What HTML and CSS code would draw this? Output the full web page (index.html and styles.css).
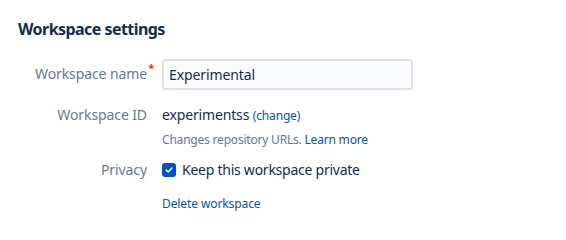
FILE: index.html
```html
<!DOCTYPE html>
<html>
<head>
<meta charset="utf-8">
<link rel="stylesheet" href="styles.css">
</head>
<body>
<div class="page">
  <h1 class="title">Workspace settings</h1>
  <div class="form">
    <div class="row row-name">
      <div class="label"><span class="label-text">Workspace name<span class="req">*</span></span></div>
      <div class="field"><input class="input" type="text" value="Experimental"></div>
    </div>
    <div class="row row-id">
      <div class="label">Workspace ID</div>
      <div class="field">
        <div class="value">experimentss <a class="link small" href="#">(change)</a></div>
        <div class="help">Changes repository URLs. <a class="link" href="#">Learn more</a></div>
      </div>
    </div>
    <div class="row row-privacy">
      <div class="label">Privacy</div>
      <div class="field">
        <label class="check">
          <span class="box"><svg width="10" height="10" viewBox="0 0 10 10"><path d="M2.3 5.2 L4.2 7 L7.8 3.2" fill="none" stroke="#fff" stroke-width="1.6" stroke-linecap="round" stroke-linejoin="round"/></svg></span>
          <span class="check-text">Keep this workspace private</span>
        </label>
      </div>
    </div>
    <div class="row row-delete">
      <div class="label"></div>
      <div class="field"><a class="link delete" href="#">Delete workspace</a></div>
    </div>
  </div>
</div>
</body>
</html>
```
FILE: styles.css
```css
* { box-sizing: border-box; }
html, body { margin: 0; padding: 0; background: #fff; }
body {
  font-family: "Noto Sans", "Open Sans", sans-serif;
  color: #172b4d;
  font-size: 14px;
}
.page { padding: 18px 18px 0 18px; }
.title {
  margin: 0;
  font-size: 16px;
  font-weight: 700;
  line-height: 22px;
  letter-spacing: -0.55px;
  color: #172b4d;
}
.form { margin-top: 19px; display: flex; flex-direction: column; }
.row { display: grid; grid-template-columns: 129px 1fr; column-gap: 15px; align-items: start; }
.label {
  text-align: right;
  color: #6b778c;
  font-size: 14px;
  line-height: 20px;
  white-space: nowrap;
  letter-spacing: -0.1px;
}
.label-text { position: relative; }
.req {
  position: absolute;
  right: -7px;
  top: -3px;
  color: #de350b;
  font-size: 11px;
  font-weight: 700;
  line-height: 14px;
}
.row-name .label { padding-top: 5px; }
.input {
  display: block;
  width: 251px;
  height: 31px;
  border: 2px solid #dfe1e6;
  border-radius: 3px;
  background: #fafbfc;
  font-family: inherit;
  font-size: 14px;
  color: #172b4d;
  padding: 0 5px;
  outline: none;
  letter-spacing: -0.1px;
}
.row-id { margin-top: 15px; }
.value { line-height: 20px; letter-spacing: -0.15px; }
.link { color: #0052cc; text-decoration: none; }
.small { font-size: 12px; }
.help { font-size: 12px; color: #6b778c; line-height: 16px; margin-top: 6px; letter-spacing: -0.2px; }
.row-privacy { margin-top: 12px; }
.check { display: flex; align-items: center; gap: 6px; line-height: 20px; cursor: pointer; }
.check-text { letter-spacing: -0.25px; }
.box {
  width: 14px; height: 14px; border-radius: 3px; background: #0052cc;
  display: inline-flex; align-items: center; justify-content: center;
}
.row-delete { margin-top: 13px; }
.delete { font-size: 12px; line-height: 16px; letter-spacing: -0.1px; }
```
